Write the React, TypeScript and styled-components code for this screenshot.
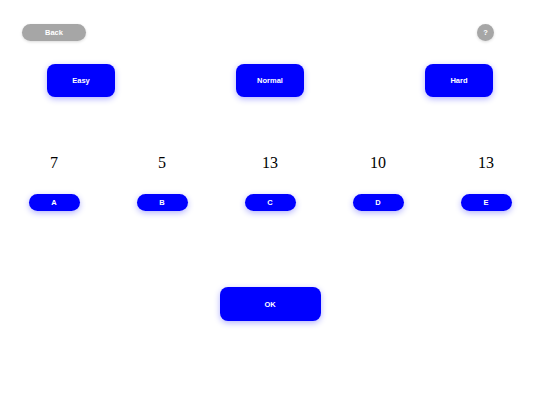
import styled, { createGlobalStyle } from "styled-components";

const GlobalStyle = createGlobalStyle`
  html, body {
    margin: 0;
    padding: 0;
    background: #ffffff;
  }
  * {
    box-sizing: border-box;
  }
`

const Page = styled.div`
  width: 540px;
  height: 405px;
  display: flex;
  flex-direction: column;
  font-family: "Liberation Sans", Arial, sans-serif;
`

const TopBar = styled.div`
  display: flex;
  justify-content: space-between;
  align-items: center;
  padding: 24px 46px 0 22px;
`

const GreyButton = styled.button`
  border: none;
  background: #a6a6a6;
  color: #ffffff;
  font-family: inherit;
  font-weight: bold;
  font-size: 7.5px;
  padding: 0;
  display: flex;
  align-items: center;
  justify-content: center;
  box-shadow: 0 1px 3px rgba(0, 0, 0, 0.15);
`

const BackButton = styled(GreyButton)`
  width: 64px;
  height: 17px;
  border-radius: 9px;
`

const HelpButton = styled(GreyButton)`
  width: 17px;
  height: 17px;
  border-radius: 50%;
`

const BlueButton = styled.button<{ $w: number; $h: number; $round?: boolean }>`
  width: ${p => p.$w}px;
  height: ${p => p.$h}px;
  border: none;
  border-radius: ${p => (p.$round ? p.$h / 2 : 8)}px;
  background: #0000ff;
  color: #ffffff;
  font-family: inherit;
  font-weight: bold;
  font-size: 7.5px;
  padding: 0;
  display: flex;
  align-items: center;
  justify-content: center;
  box-shadow: 0 2px 6px rgba(0, 0, 255, 0.3);
`

const LevelRow = styled.div`
  display: flex;
  justify-content: space-between;
  padding: 0 47px;
  margin-top: 23px;
`

const ChoiceRow = styled.div`
  display: grid;
  grid-template-columns: repeat(5, 1fr);
  margin-top: 57px;
`

const Choice = styled.div`
  display: flex;
  flex-direction: column;
  align-items: center;
  gap: 22px;
`

const Count = styled.div`
  font-family: "Liberation Serif", "Times New Roman", serif;
  font-size: 16px;
  line-height: 18px;
  color: #000000;
`

const Footer = styled.div`
  display: flex;
  justify-content: center;
  margin-top: 76px;
`

const levels = ["Easy", "Normal", "Hard"]
const choices = [
  { label: "A", count: 7 },
  { label: "B", count: 5 },
  { label: "C", count: 13 },
  { label: "D", count: 10 },
  { label: "E", count: 13 },
]

const App = () => {
  return (
    <Page>
      <GlobalStyle />
      <TopBar>
        <BackButton>Back</BackButton>
        <HelpButton>?</HelpButton>
      </TopBar>
      <LevelRow>
        {levels.map(l => (
          <BlueButton key={l} $w={68} $h={33}>{l}</BlueButton>
        ))}
      </LevelRow>
      <ChoiceRow>
        {choices.map(c => (
          <Choice key={c.label}>
            <Count>{c.count}</Count>
            <BlueButton $w={51} $h={17} $round>{c.label}</BlueButton>
          </Choice>
        ))}
      </ChoiceRow>
      <Footer>
        <BlueButton $w={101} $h={34}>OK</BlueButton>
      </Footer>
    </Page>
  );
}

export default App;
